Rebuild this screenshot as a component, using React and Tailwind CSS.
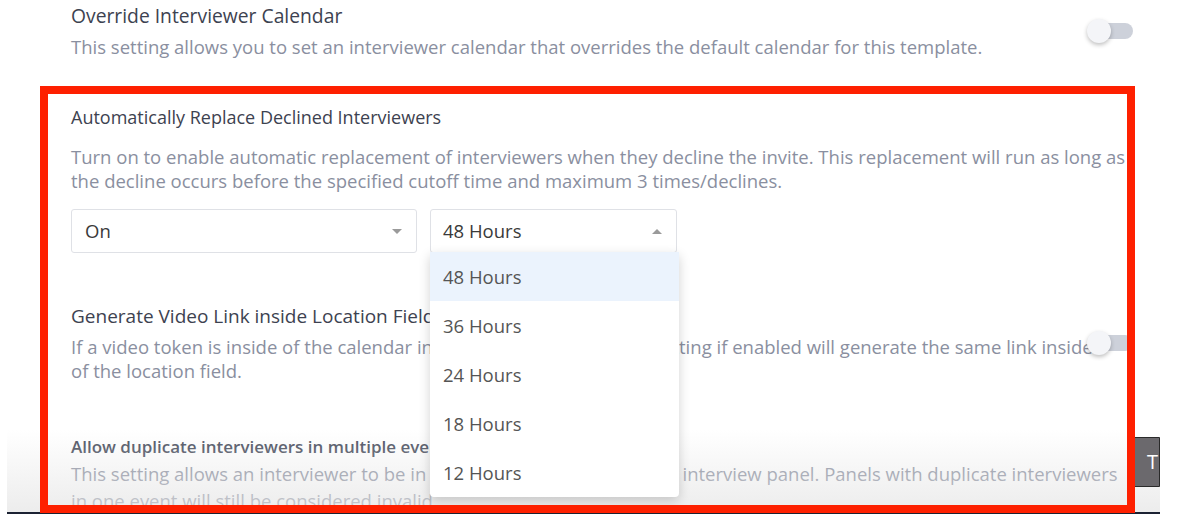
import React from "react";

const Toggle = () => (
  <div className="flex items-center w-[46px] h-[24px]">
    <div className="relative z-10 w-[24px] h-[24px] shrink-0 rounded-full bg-[#f4f5f8] shadow-[0_2px_4px_rgba(0,0,0,0.25)]" />
    <div className="-ml-[16px] w-[38px] h-[16px] rounded-full bg-[#cdd1da]" />
  </div>
);

const Caret = ({ up }) => (
  <span
    className={
      up
        ? "w-0 h-0 border-x-[5px] border-x-transparent border-b-[5px] border-b-[#9a9a9a]"
        : "w-0 h-0 border-x-[5px] border-x-transparent border-t-[5px] border-t-[#9a9a9a]"
    }
  />
);

const hours = ["48 Hours", "36 Hours", "24 Hours", "18 Hours", "12 Hours"];

export default function App() {
  return (
    <div className="relative w-[1182px] h-[528px] overflow-hidden bg-white font-['Open_Sans',sans-serif]">
      <div className="pl-[71px] w-[1133px] pt-[4px] flex flex-col">
        {/* override calendar */}
        <div className="relative">
          <p className="text-[19.3px] leading-[24px] text-[#3d4250]">Override Interviewer Calendar</p>
          <p className="mt-[7px] text-[18.5px] leading-[24px] text-[#8a8fa0]">
            This setting allows you to set an interviewer calendar that overrides the default calendar for this template.
          </p>
          <div className="absolute top-[15px] right-0">
            <Toggle />
          </div>
        </div>

        {/* replace declined */}
        <div className="mt-[47px]">
          <p className="text-[18px] leading-[22px] text-[#3d4250]">Automatically Replace Declined Interviewers</p>
          <p className="mt-[17px] text-[18.5px] leading-[24px] text-[#8a8fa0]">
            Turn on to enable automatic replacement of interviewers when they decline the invite. This replacement will run as long as the decline occurs before the specified cutoff time and maximum 3 times/declines.
          </p>
          <div className="mt-[16px] flex gap-[13px]">
            <div className="w-[346px] h-[44px] border border-[#dfe1e6] rounded-[3px] flex items-center justify-between pl-[13px] pr-[14px]">
              <span className="text-[18.5px] text-[#3a3a3a]">On</span>
              <Caret />
            </div>
            <div className="relative w-[247px] h-[44px] border border-[#dfe1e6] rounded-[3px] flex items-center justify-between pl-[12px] pr-[14px]">
              <span className="text-[18.5px] text-[#3a3a3a]">48 Hours</span>
              <Caret up />
              <div className="absolute left-[-1px] top-[42px] w-[249px] flex flex-col bg-white rounded-b-[4px] shadow-[0_4px_12px_rgba(0,0,0,0.18)] z-10">
                {hours.map((h, i) => (
                  <div
                    key={h}
                    className={
                      i === 0
                        ? "h-[49px] flex items-center pl-[13px] text-[18.5px] text-[#555] bg-[#ebf3fd]"
                        : "h-[49px] flex items-center pl-[13px] text-[18.5px] text-[#555]"
                    }
                  >
                    {h}
                  </div>
                ))}
              </div>
            </div>
          </div>
        </div>

        {/* video link */}
        <div className="relative mt-[51px]">
          <p className="text-[19px] leading-[24px] text-[#3d4250]">Generate Video Link inside Location Field</p>
          <p className="mt-[7px] pr-[40px] text-[18.5px] leading-[24px] text-[#8a8fa0]">
            If a video token is inside of the calendar invite description field, this setting if enabled will generate the same link inside of the location field.
          </p>
          <div className="absolute top-[27px] right-0">
            <Toggle />
          </div>
        </div>

        {/* duplicates */}
        <div className="mt-[53px]">
          <p className="text-[17px] leading-[22px] font-semibold text-[#4b5060]">Allow duplicate interviewers in multiple events</p>
          <p className="mt-[2px] text-[18.5px] leading-[27px] text-[#8a8fa0]">
            This setting allows an interviewer to be in multiple events for the same interview panel. Panels with duplicate interviewers in one event will still be considered invalid.
          </p>
        </div>
      </div>

      {/* video frame bottom shading */}
      <div className="absolute left-[7px] top-[430px] w-[1153px] h-[83px] bg-gradient-to-b from-white/0 to-[#e4e4e4]/70" />
      <div className="absolute left-[7px] top-[512px] w-[1153px] h-[2px] bg-[#1c2233]" />
      <div className="absolute left-0 top-[514px] w-full h-[14px] bg-white" />
      <div className="absolute left-[1127px] top-[437px] w-[33px] h-[50px] rounded-l-[5px] bg-[#6b696d] border border-[#2a2a2a] flex items-center justify-end pr-[1px] text-white text-[20px] overflow-hidden">
        T
      </div>

      {/* annotation box */}
      <div className="absolute left-[40px] top-[86px] w-[1095px] h-[427px] border-[8px] border-[#fe2000] z-20" />
    </div>
  );
}
